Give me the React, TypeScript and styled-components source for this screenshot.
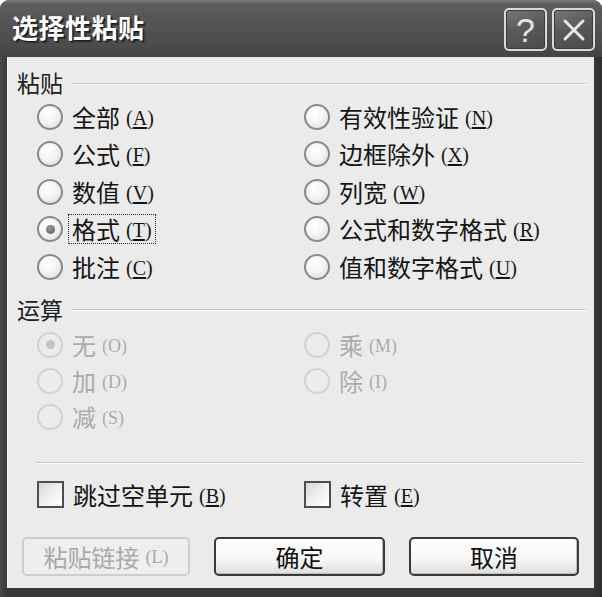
import React from "react";
import styled, { createGlobalStyle, css } from "styled-components";

const GlobalStyle = createGlobalStyle`
  html, body {
    margin: 0;
    padding: 0;
    background: #ffffff;
  }
  body {
    font-family: "Noto Sans CJK SC", "Noto Sans", sans-serif;
    overflow: hidden;
  }
  * { box-sizing: border-box; }
`;

const Window = styled.div`
  width: 602px;
  height: 597px;
  display: flex;
  flex-direction: column;
  background: linear-gradient(90deg, #4a4a4a 0px, #383838 7px, #383838 593px, #2e2e2e 602px);
  border-radius: 9px 9px 0 0;
  overflow: hidden;
`;

const TitleBar = styled.div`
  height: 57px;
  flex: none;
  display: flex;
  align-items: flex-start;
  padding: 0 7px 0 12px;
  background: linear-gradient(180deg, #7a7a7a 0px, #5e5e5e 4px, #555555 20px, #4c4c4c 45px, #424242 57px);
`;

const Title = styled.div`
  margin-top: 10px;
  font-size: 26px;
  font-weight: 700;
  line-height: 34px;
  color: #ffffff;
  letter-spacing: 0.5px;
  text-shadow: 1px 1px 0 #1e1e1e, 2px 2px 1px #2a2a2a;
`;

const CaptionButtons = styled.div`
  margin-left: auto;
  margin-top: 8px;
  display: flex;
  gap: 5px;
`;

const CaptionButton = styled.div`
  width: 43px;
  height: 43px;
  border: 2px solid #d9d9d9;
  border-radius: 5px;
  background: linear-gradient(160deg, #787878 0%, #5a5a5a 45%, #4a4a4a 100%);
  display: flex;
  align-items: center;
  justify-content: center;
  color: #e4e4e4;
  font-family: "Liberation Sans", Arial, sans-serif;
  font-size: 34px;
  line-height: 1;
  box-shadow: inset 0 0 0 1px #3a3a3a;
`;

const Client = styled.div`
  flex: 1;
  margin: 0 8px 9px 7px;
  background: #ebebeb;
  border-left: 1px solid #f6f6f6;
  display: flex;
  flex-direction: column;
  padding: 10px 8px 0 9px;
`;

const GroupHeader = styled.div<{ $top?: number }>`
  height: 30px;
  display: flex;
  align-items: center;
  gap: 8px;
  margin-top: ${(p) => p.$top ?? 0}px;
`;

const GroupLabel = styled.span`
  font-size: 23px;
  line-height: 30px;
  color: #202020;
`;

const GroupLine = styled.div`
  flex: 1;
  height: 2px;
  margin-top: 3px;
  border-top: 1px solid #c6c6c6;
  border-bottom: 1px solid #fbfbfb;
`;

const OptionGrid = styled.div<{ $row: number; $top?: number }>`
  display: grid;
  grid-template-columns: 267px 1fr;
  grid-auto-rows: ${(p) => p.$row}px;
  padding-left: 20px;
  margin-top: ${(p) => p.$top ?? 0}px;
`;

const Option = styled.div<{ $disabled?: boolean }>`
  display: flex;
  align-items: center;
  gap: 5px;
  color: ${(p) => (p.$disabled ? "#ababab" : "#151515")};
`;

const RadioCircle = styled.span<{ $checked?: boolean; $disabled?: boolean }>`
  position: relative;
  flex: none;
  width: 26px;
  height: 26px;
  border-radius: 50%;
  border: 2px solid ${(p) => (p.$disabled ? "#d2d2d2" : "#8a8a8a")};
  background: ${(p) =>
    p.$disabled
      ? "#ececec"
      : "radial-gradient(circle at 40% 35%, #ffffff 0%, #f4f4f4 45%, #d8d8d8 100%)"};
  ${(p) =>
    p.$checked &&
    css`
      &::after {
        content: "";
        position: absolute;
        left: 50%;
        top: 50%;
        width: 9px;
        height: 9px;
        margin: -4.5px 0 0 -4.5px;
        border-radius: 50%;
        background: ${p.$disabled ? "#c4c4c4" : "radial-gradient(circle at 40% 35%, #9a9a9a, #5a5a5a)"};
      }
    `}
`;

const CheckBox = styled.span`
  flex: none;
  width: 27px;
  height: 27px;
  border: 2px solid #4e4e4e;
  background: linear-gradient(135deg, #d6d6d6 0%, #f0f0f0 50%, #ffffff 100%);
`;

const LabelText = styled.span<{ $focused?: boolean }>`
  display: inline-flex;
  align-items: center;
  font-size: 24px;
  line-height: 28px;
  padding: 0 3px;
  border: 1px dotted ${(p) => (p.$focused ? "#2a2a2a" : "transparent")};
  white-space: nowrap;
`;

const Key = styled.span<{ $small?: boolean }>`
  margin-left: 6px;
  font-family: "Liberation Serif", "Times New Roman", serif;
  font-size: ${(p) => (p.$small ? 18 : 20)}px;
  line-height: 24px;
  position: relative;
  top: 1px;
`;

const KeyLetter = styled.span<{ $plain?: boolean }>`
  text-decoration: ${(p) => (p.$plain ? "none" : "underline")};
  text-underline-offset: 2px;
`;

const Divider = styled.div`
  margin: 27px 4px 0 20px;
  height: 2px;
  border-top: 1px solid #c6c6c6;
  border-bottom: 1px solid #fbfbfb;
`;

const ButtonRow = styled.div`
  display: flex;
  gap: 24px;
  padding-left: 5px;
  margin-top: 24px;
`;

const PushButton = styled.div<{ $width: number; $disabled?: boolean }>`
  width: ${(p) => p.$width}px;
  height: 39px;
  display: flex;
  align-items: center;
  justify-content: center;
  font-size: 24px;
  border-radius: 5px;
  ${(p) =>
    p.$disabled
      ? css`
          border: 2px solid #cdcdcd;
          background: #eeeeee;
          color: #a9a9a9;
        `
      : css`
          border: 2px solid #3a3a3a;
          background: linear-gradient(180deg, #ffffff 0%, #f6f6f6 60%, #dedede 100%);
          color: #111111;
          box-shadow: inset -1px -1px 0 #bdbdbd;
        `}
`;

type Opt = { label: string; key: string; checked?: boolean; focused?: boolean };

const pasteLeft: Opt[] = [
  { label: "全部", key: "A" },
  { label: "公式", key: "F" },
  { label: "数值", key: "V" },
  { label: "格式", key: "T", checked: true, focused: true },
  { label: "批注", key: "C" },
];
const pasteRight: Opt[] = [
  { label: "有效性验证", key: "N" },
  { label: "边框除外", key: "X" },
  { label: "列宽", key: "W" },
  { label: "公式和数字格式", key: "R" },
  { label: "值和数字格式", key: "U" },
];

const pasteOptions: Opt[] = pasteLeft.flatMap((o, i) => [o, pasteRight[i]]);

const opOptions: (Opt | null)[] = [
  { label: "无", key: "O", checked: true },
  { label: "乘", key: "M" },
  { label: "加", key: "D" },
  { label: "除", key: "I" },
  { label: "减", key: "S" },
  null,
];

function Mnemonic({ k, disabled }: { k: string; disabled?: boolean }) {
  return (
    <Key $small={disabled}>
      (<KeyLetter $plain={disabled}>{k}</KeyLetter>)
    </Key>
  );
}

export default function App() {
  return (
    <>
      <GlobalStyle />
      <Window>
        <TitleBar>
          <Title>选择性粘贴</Title>
          <CaptionButtons>
            <CaptionButton>?</CaptionButton>
            <CaptionButton>
              <svg width="26" height="26" viewBox="0 0 26 26">
                <path d="M4 4 L22 22 M22 4 L4 22" stroke="#e6e6e6" strokeWidth="3" strokeLinecap="round" />
              </svg>
            </CaptionButton>
          </CaptionButtons>
        </TitleBar>
        <Client>
          <GroupHeader>
            <GroupLabel>粘贴</GroupLabel>
            <GroupLine />
          </GroupHeader>
          <OptionGrid $row={37.5} $top={1}>
            {pasteOptions.map((o) => (
              <Option key={o.key}>
                <RadioCircle $checked={o.checked} />
                <LabelText $focused={o.focused}>
                  {o.label}
                  <Mnemonic k={o.key} />
                </LabelText>
              </Option>
            ))}
          </OptionGrid>
          <GroupHeader $top={8}>
            <GroupLabel>运算</GroupLabel>
            <GroupLine />
          </GroupHeader>
          <OptionGrid $row={36} $top={3}>
            {opOptions.map((o, i) =>
              o ? (
                <Option key={o.key} $disabled>
                  <RadioCircle $checked={o.checked} $disabled />
                  <LabelText>
                    {o.label}
                    <Mnemonic k={o.key} disabled />
                  </LabelText>
                </Option>
              ) : (
                <div key={"empty" + i} />
              )
            )}
          </OptionGrid>
          <Divider />
          <OptionGrid $row={36} $top={13}>
            <Option>
              <CheckBox />
              <LabelText>
                跳过空单元
                <Mnemonic k="B" />
              </LabelText>
            </Option>
            <Option>
              <CheckBox />
              <LabelText>
                转置
                <Mnemonic k="E" />
              </LabelText>
            </Option>
          </OptionGrid>
          <ButtonRow>
            <PushButton $width={168} $disabled>
              粘贴链接
              <Mnemonic k="L" disabled />
            </PushButton>
            <PushButton $width={171}>确定</PushButton>
            <PushButton $width={170}>取消</PushButton>
          </ButtonRow>
        </Client>
      </Window>
    </>
  );
}
